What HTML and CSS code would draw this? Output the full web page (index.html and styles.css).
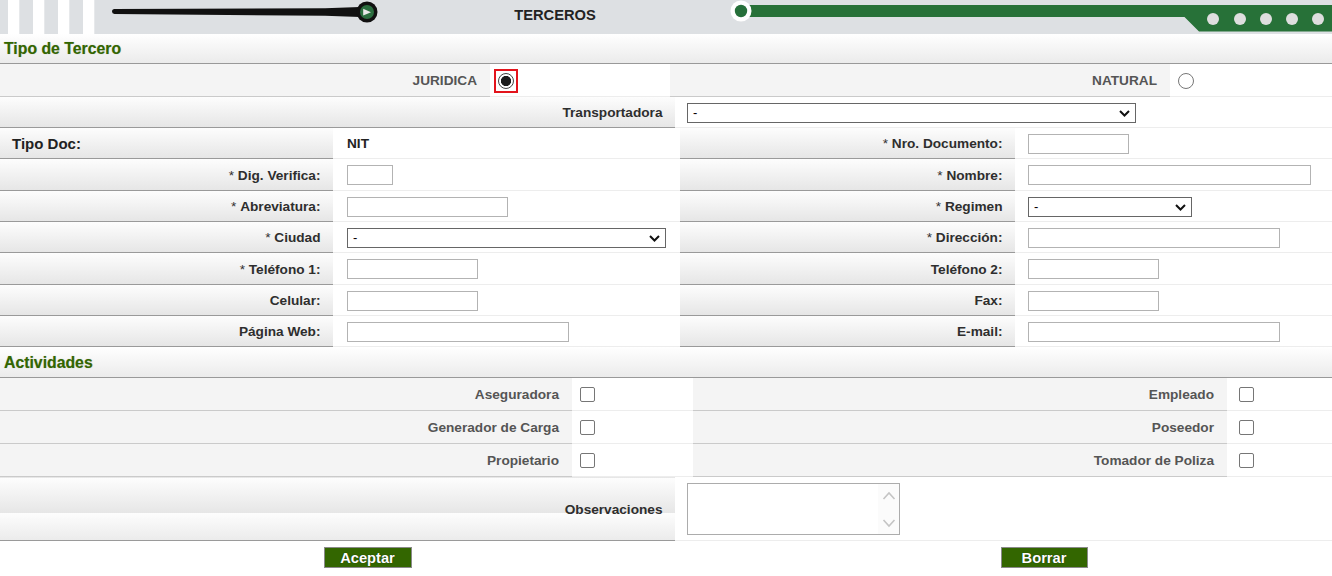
FILE: index.html
```html
<!DOCTYPE html>
<html lang="es">
<head>
<meta charset="utf-8">
<title>Terceros</title>
<link rel="stylesheet" href="styles.css">
</head>
<body>
<header class="banner">
  <svg class="banner-left" width="386" height="34" viewBox="0 0 386 34">
    <rect x="8" y="0" width="11.3" height="34" fill="#fff"/>
    <rect x="33" y="0" width="11.3" height="34" fill="#fff"/>
    <rect x="58" y="0" width="11.3" height="34" fill="#fff"/>
    <rect x="83" y="0" width="11.3" height="34" fill="#fff"/>
    <path d="M114.5 9 L325 8.3 L360 7 L360 17 L325 15.7 L114.5 14 A2.5 2.5 0 0 1 114.5 9 Z" fill="#111"/>
    <circle cx="367" cy="12" r="10.5" fill="#111"/>
    <circle cx="367" cy="12" r="7" fill="#2b6e3f"/>
    <path d="M363.2 8.8 L371 12.3 L363.2 15.6 Z" fill="#e8e8e8"/>
  </svg>
  <div class="banner-title">TERCEROS</div>
  <svg class="banner-right" width="612" height="34" viewBox="0 0 612 34">
    <polygon points="28,5 612,5 612,31.5 479,31.5 464.5,17 28,17" fill="#277138"/>
    <circle cx="21" cy="11" r="10.5" fill="#fff"/>
    <circle cx="21" cy="11" r="6.2" fill="#256f3a"/>
    <circle cx="493" cy="19" r="6" fill="#dedede"/>
    <circle cx="520" cy="19" r="6" fill="#dedede"/>
    <circle cx="546" cy="19" r="6" fill="#dedede"/>
    <circle cx="572" cy="19" r="6" fill="#dedede"/>
    <circle cx="598" cy="19" r="6" fill="#dedede"/>
  </svg>
</header>

<div class="sec-title h30">Tipo de Tercero</div>

<div class="row row-tipo h33">
  <div class="cell flat">JURIDICA</div>
  <div class="cell val pad4"><span class="focusbox"><input class="radio" type="radio" name="tipo" checked></span></div>
  <div class="cell flat">NATURAL</div>
  <div class="cell val pad8"><input class="radio" type="radio" name="tipo"></div>
</div>

<div class="row row-wide h31">
  <div class="cell lbl">Transportadora</div>
  <div class="cell val pad12">
    <span class="selwrap"><select class="sel w449"><option>-</option></select><svg class="chev" width="11" height="7" viewBox="0 0 11 7"><path d="M1 1 L5.5 5.5 L10 1" fill="none" stroke="#111" stroke-width="2"/></svg></span>
  </div>
</div>

<div class="row row-form h31">
  <div class="cell lbl left big">Tipo Doc:</div>
  <div class="cell val pad14"><span class="strong">NIT</span></div>
  <div class="cell lbl"><span class="ast">*</span>&nbsp;Nro. Documento:</div>
  <div class="cell val pad13"><input class="inp w101" type="text"></div>
</div>

<div class="row row-form h32">
  <div class="cell lbl"><span class="ast">*</span>&nbsp;Dig. Verifica:</div>
  <div class="cell val pad14"><input class="inp w46" type="text"></div>
  <div class="cell lbl"><span class="ast">*</span>&nbsp;Nombre:</div>
  <div class="cell val pad13"><input class="inp w283" type="text"></div>
</div>

<div class="row row-form h31">
  <div class="cell lbl"><span class="ast">*</span>&nbsp;Abreviatura:</div>
  <div class="cell val pad14"><input class="inp w161" type="text"></div>
  <div class="cell lbl"><span class="ast">*</span>&nbsp;Regimen</div>
  <div class="cell val pad13">
    <span class="selwrap"><select class="sel w164"><option>-</option></select><svg class="chev" width="11" height="7" viewBox="0 0 11 7"><path d="M1 1 L5.5 5.5 L10 1" fill="none" stroke="#111" stroke-width="2"/></svg></span>
  </div>
</div>

<div class="row row-form h31">
  <div class="cell lbl"><span class="ast">*</span>&nbsp;Ciudad</div>
  <div class="cell val pad14">
    <span class="selwrap"><select class="sel w319"><option>-</option></select><svg class="chev" width="11" height="7" viewBox="0 0 11 7"><path d="M1 1 L5.5 5.5 L10 1" fill="none" stroke="#111" stroke-width="2"/></svg></span>
  </div>
  <div class="cell lbl"><span class="ast">*</span>&nbsp;Dirección:</div>
  <div class="cell val pad13"><input class="inp w252" type="text"></div>
</div>

<div class="row row-form h32">
  <div class="cell lbl"><span class="ast">*</span>&nbsp;Teléfono 1:</div>
  <div class="cell val pad14"><input class="inp w131" type="text"></div>
  <div class="cell lbl">Teléfono 2:</div>
  <div class="cell val pad13"><input class="inp w131" type="text"></div>
</div>

<div class="row row-form h31">
  <div class="cell lbl">Celular:</div>
  <div class="cell val pad14"><input class="inp w131" type="text"></div>
  <div class="cell lbl">Fax:</div>
  <div class="cell val pad13"><input class="inp w131" type="text"></div>
</div>

<div class="row row-form h31">
  <div class="cell lbl">Página Web:</div>
  <div class="cell val pad14"><input class="inp w222" type="text"></div>
  <div class="cell lbl">E-mail:</div>
  <div class="cell val pad13"><input class="inp w252" type="text"></div>
</div>

<div class="sec-title h31 low">Actividades</div>

<div class="row row-act h33">
  <div class="cell flat">Aseguradora</div>
  <div class="cell val pad8"><input class="chk" type="checkbox"></div>
  <div class="cell flat">Empleado</div>
  <div class="cell val pad12"><input class="chk" type="checkbox"></div>
</div>
<div class="row row-act h33">
  <div class="cell flat">Generador de Carga</div>
  <div class="cell val pad8"><input class="chk" type="checkbox"></div>
  <div class="cell flat">Poseedor</div>
  <div class="cell val pad12"><input class="chk" type="checkbox"></div>
</div>
<div class="row row-act h33">
  <div class="cell flat">Propietario</div>
  <div class="cell val pad8"><input class="chk" type="checkbox"></div>
  <div class="cell flat">Tomador de Poliza</div>
  <div class="cell val pad12"><input class="chk" type="checkbox"></div>
</div>

<div class="row row-wide h64">
  <div class="cell lbl bands">Observaciones</div>
  <div class="cell val pad12">
    <div class="tawrap">
      <textarea class="ta"></textarea>
      <div class="scroll">
        <svg width="14" height="9" viewBox="0 0 14 9"><path d="M1.5 8 L7 2 L12.5 8" fill="none" stroke="#c4c4c4" stroke-width="1.6"/></svg>
        <svg width="14" height="9" viewBox="0 0 14 9"><path d="M1.5 1 L7 7 L12.5 1" fill="none" stroke="#c4c4c4" stroke-width="1.6"/></svg>
      </div>
    </div>
  </div>
</div>

<div class="btns">
  <div class="btncell"><button class="btn btn-acc" type="button">Aceptar</button></div>
  <div class="btncell right"><button class="btn btn-bor" type="button">Borrar</button></div>
</div>
</body>
</html>
```

FILE: styles.css
```css
html, body {
  margin: 0;
  padding: 0;
  background: #fff;
}
body {
  font-family: "Liberation Sans", Arial, sans-serif;
  font-size: 13.65px;
  color: #333;
  width: 1332px;
  overflow: hidden;
}

/* banner */
.banner {
  display: flex;
  height: 34px;
  background: #dde0e3;
}
.banner-left, .banner-right {
  display: block;
  flex: none;
}
.banner-title {
  flex: 1;
  height: 29px;
  padding-left: 4px;
  display: flex;
  align-items: center;
  justify-content: center;
  font-weight: bold;
  font-size: 14.7px;
  color: #222;
}

/* section titles */
.sec-title {
  box-sizing: border-box;
  display: flex;
  align-items: center;
  padding-left: 4px;
  font-size: 15.8px;
  font-weight: bold;
  color: #336600;
  text-shadow: 0 0 1px rgba(30, 50, 0, 0.35);
  background: linear-gradient(#ffffff, #ebebeb);
  border-bottom: 1px solid #999;
}
.sec-title.low {
  padding-top: 2px;
}

/* rows */
.row {
  display: grid;
}
.row-tipo { grid-template-columns: 490px 180px 500px 1fr; }
.row-wide { grid-template-columns: 675px 1fr; }
.row-form { grid-template-columns: 333px 347px 335px 1fr; }
.row-act  { grid-template-columns: 572px 121px 534px 1fr; }

.h30 { height: 30px; }
.h31 { height: 31px; }
.h32 { height: 32px; }
.h33 { height: 33px; }
.h64 { height: 64px; }

.cell {
  box-sizing: border-box;
  display: flex;
  align-items: center;
  min-width: 0;
  padding-top: 1px;
}
.lbl {
  justify-content: flex-end;
  padding-right: 12.5px;
  font-weight: bold;
  color: #2e2e2e;
  background: linear-gradient(#fdfdfd, #e6e6e6);
  border-bottom: 1px solid #9a9a9a;
}
.lbl.left {
  justify-content: flex-start;
  padding-left: 12px;
}
.lbl.big {
  font-size: 15px;
  color: #222;
}
.lbl.bands {
  background: linear-gradient(#fdfdfd, #e6e6e6) 0 1px / 100% 35px repeat-y;
}
.ast {
  font-weight: normal;
  color: #333;
}
.flat {
  justify-content: flex-end;
  padding-right: 13px;
  font-weight: bold;
  color: #555;
  background: #f4f4f4;
  border-bottom: 1px solid #cacaca;
}
.val {
  background: #fff;
  border-bottom: 1px solid #ededed;
}
.pad4  { padding-left: 4px; }
.pad8  { padding-left: 8px; }
.pad12 { padding-left: 12px; }
.pad13 { padding-left: 13px; }
.pad14 { padding-left: 14px; }

.strong {
  font-weight: bold;
  color: #222;
}

/* controls */
.inp {
  box-sizing: border-box;
  height: 20px;
  margin: 0;
  padding: 1px 3px;
  border: 1px solid #b3b3b3;
  border-radius: 0;
  background: #fff;
  font: 13px "Liberation Sans", Arial, sans-serif;
}
.w46 { width: 46px; }
.w101 { width: 101px; }
.w131 { width: 131px; }
.w161 { width: 161px; }
.w222 { width: 222px; }
.w252 { width: 252px; }
.w283 { width: 283px; }
.w164 { width: 164px; }
.w319 { width: 319px; }
.w449 { width: 449px; }

.selwrap {
  position: relative;
  display: inline-block;
  line-height: 0;
}
.sel {
  appearance: none;
  -webkit-appearance: none;
  box-sizing: border-box;
  height: 20px;
  margin: 0;
  padding: 0 20px 0 5px;
  border: 1px solid #666;
  border-radius: 0;
  background: #fff;
  color: #000;
  font: 13px "Liberation Sans", Arial, sans-serif;
}
.chev {
  position: absolute;
  right: 6px;
  top: 7px;
  pointer-events: none;
}

.focusbox {
  display: flex;
  padding: 2px;
  border: 2px solid #e3141c;
}
.radio {
  appearance: none;
  -webkit-appearance: none;
  box-sizing: border-box;
  width: 16px;
  height: 16px;
  margin: 0;
  border: 1px solid #777;
  border-radius: 50%;
  background: #fff;
}
.radio:checked {
  border-color: #444;
  background: radial-gradient(circle, #1c1c1c 0 4.8px, #fff 5.4px);
}

.chk {
  appearance: none;
  -webkit-appearance: none;
  box-sizing: border-box;
  width: 15px;
  height: 15px;
  margin: 0;
  border: 1px solid #767676;
  border-radius: 2px;
  background: #fff;
}

/* textarea */
.tawrap {
  box-sizing: border-box;
  display: flex;
  width: 213px;
  height: 52px;
  border: 1px solid #acacac;
  background: #fff;
}
.ta {
  flex: 1;
  min-width: 0;
  margin: 0;
  padding: 2px;
  border: 0;
  resize: none;
  outline: none;
  font: 13px "Liberation Sans", Arial, sans-serif;
}
.scroll {
  width: 21px;
  display: flex;
  flex-direction: column;
  justify-content: space-between;
  align-items: center;
  padding: 7px 0 6px;
  background: #fbfbfb;
}
.scroll svg { display: block; }

/* buttons */
.btns {
  display: grid;
  grid-template-columns: 735px 1fr;
  height: 35px;
}
.btncell {
  display: flex;
  justify-content: center;
  align-items: flex-start;
  padding-top: 6px;
}
.btncell.right {
  padding-left: 21px;
}
.btn {
  box-sizing: border-box;
  height: 21px;
  margin: 0;
  padding: 0;
  border: 1px solid #8a8a8a;
  border-radius: 0;
  background: #336600;
  color: #fff;
  font: bold 14.7px "Liberation Sans", Arial, sans-serif;
  text-shadow: 0 0 1px #0a2000;
}
.btn-acc { width: 88px; }
.btn-bor { width: 87px; }
```
